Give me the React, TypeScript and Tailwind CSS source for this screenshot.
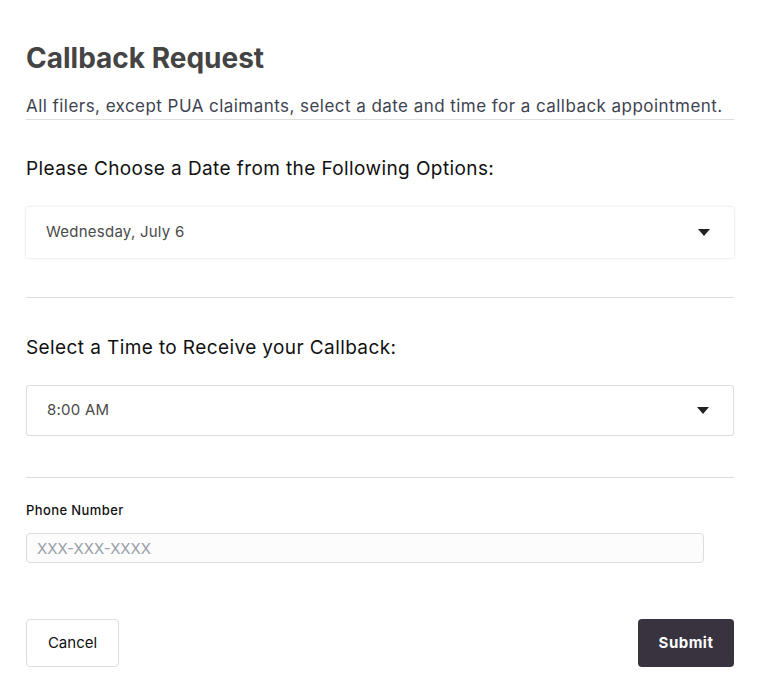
import { useState } from 'react'

const font = { fontFamily: 'Inter, "Noto Sans", sans-serif' }

function Caret() {
  return (
    <svg width="12" height="7" viewBox="0 0 12 7" className="shrink-0">
      <path d="M0 0h12L6 7z" fill="#222" />
    </svg>
  )
}

function SelectBox({ value, variant }: { value: string; variant: 'shadow' | 'border' }) {
  const box =
    variant === 'shadow'
      ? 'shadow-[0_0_3px_rgba(0,0,0,0.15)]'
      : 'border border-[#dcdcdc]'
  return (
    <div className={`h-[51px] rounded-[3px] bg-white flex items-center justify-between pl-5 pr-6 ${box}`}>
      <span className="text-[15px] tracking-[0.25px] text-[#4a4a4a]">{value}</span>
      <Caret />
    </div>
  )
}

export default function App() {
  const [phone, setPhone] = useState('')

  return (
    <div className="min-h-[697px] bg-white px-[26px] pt-[42px]" style={font}>
      <div className="w-[708px]">
        <h1 className="text-[28px] leading-[32px] font-bold text-[#444444]">Callback Request</h1>
        <p className="mt-[21px] pb-[2px] border-b border-[#dddddd] text-[17px] leading-[22px] tracking-[0.45px] text-[#3e4350]">
          All filers, except PUA claimants, select a date and time for a callback appointment.
        </p>

        <h2 className="mt-[37px] text-[19px] leading-[24px] tracking-[0.4px] text-[#111111]">
          Please Choose a Date from the Following Options:
        </h2>
        <div className="mt-[26px]">
          <SelectBox value="Wednesday, July 6" variant="shadow" />
        </div>

        <div className="mt-[39px] border-t border-[#dddddd]" />

        <h2 className="mt-[38px] text-[19px] leading-[24px] tracking-[0.4px] text-[#111111]">
          Select a Time to Receive your Callback:
        </h2>
        <div className="mt-[25px]">
          <SelectBox value="8:00 AM" variant="border" />
        </div>

        <div className="mt-[41px] border-t border-[#dddddd]" />

        <label className="block mt-[23px] text-[13px] leading-[18px] font-medium tracking-[0.4px] text-[#111111]">
          Phone Number
        </label>
        <input
          value={phone}
          onChange={(e) => setPhone(e.target.value)}
          placeholder="XXX-XXX-XXXX"
          className="mt-[14px] block w-[678px] h-[30px] rounded-[4px] border border-[#dddddd] bg-[#fcfcfc] px-[10px] text-[15px] placeholder:text-[#9aa0a8] outline-none"
        />

        <div className="mt-[56px] flex justify-between">
          <button className="h-[48px] w-[93px] rounded-[4px] border border-[#dddddd] bg-white text-[15px] text-[#111111]">
            Cancel
          </button>
          <button className="h-[48px] w-[96px] rounded-[4px] bg-[#38333f] text-[15px] font-bold tracking-[0.5px] text-white">
            Submit
          </button>
        </div>
      </div>
    </div>
  )
}
